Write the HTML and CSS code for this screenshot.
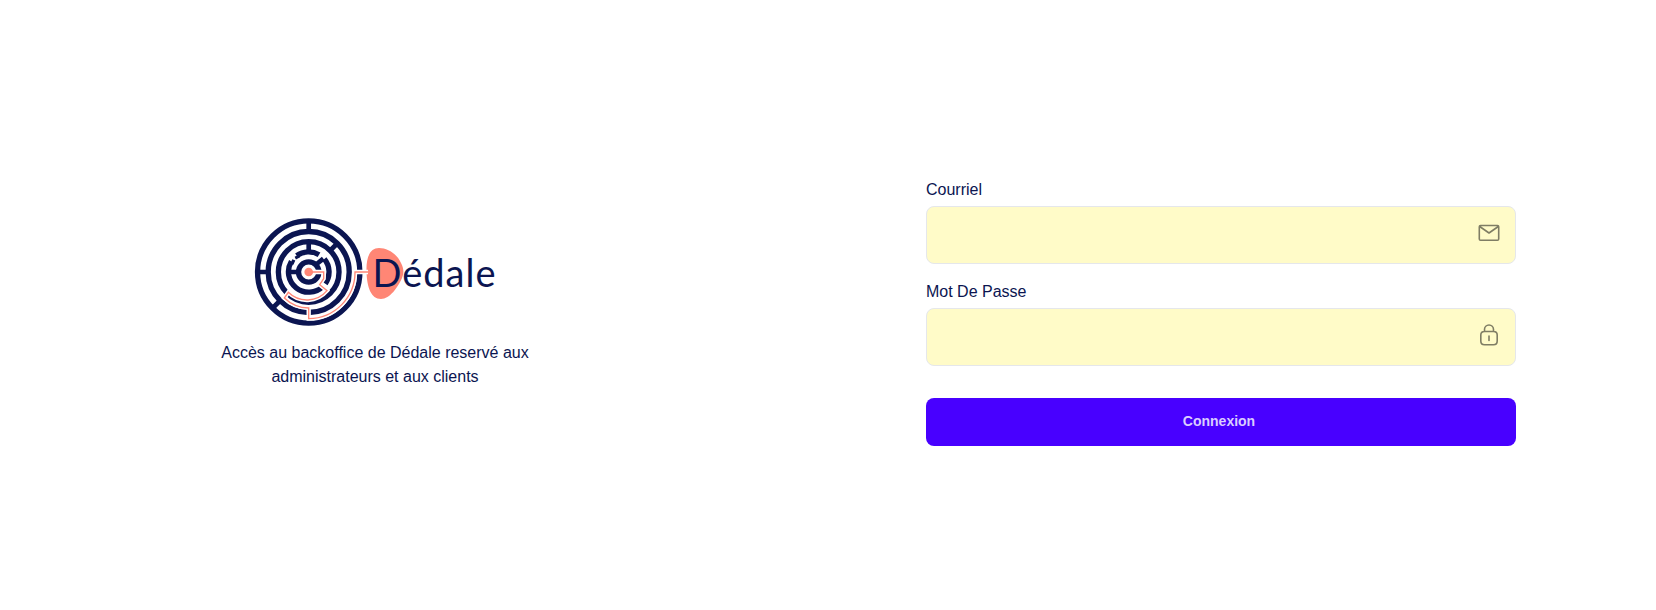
FILE: index.html
```html
<!DOCTYPE html>
<html lang="fr">
<head>
<meta charset="utf-8">
<title>Dédale</title>
<link rel="stylesheet" href="styles.css">
</head>
<body>
<main class="page">
  <section class="intro">
    <svg class="logo" viewBox="0 0 242 110" role="img" aria-label="Dédale">
      <path class="blob" d="M112.500 55C112 40 116 31 125 31C134 31 143 37 147 46C150 52 150 56 148 61C144 70 136 82 127 82C117 82 113 70 112.500 55Z"/>
      <g transform="translate(54.700 55) scale(.33333)">
        <g class="maze">
          <circle r="153.500"/>
          <circle r="121.500"/>
          <circle r="91"/>
          <path d="M-36 -49A61 61 0 0 1 31 -52M47 -39A61 61 0 0 1 50 35M43 43A61 61 0 0 1 -52 -32"/>
          <circle r="30.500"/>
          <path class="spoke" d="M0 -153V-122M0 -92V-61M-153 0H-122M-61 0H-31M66 -66L87 -87M24 -24L44 -40M-87 87L-108 108M-36 -49L-32 -41M-52 -32L-43 -28"/>
        </g>
        <path class="halo" d="M0 0H45V20L33 38L55 56A79 79 0 0 1 -61 61L-73 78A107 107 0 0 0 0 108V140A140 140 0 0 0 139 0H178"/>
        <path class="thread" d="M0 0H45V20L33 38L55 56A79 79 0 0 1 -61 61L-73 78A107 107 0 0 0 0 108V140A140 140 0 0 0 139 0H178"/>
        <circle class="dot" r="13"/>
      </g>
      <text class="wordmark" x="118.500" y="69.700" textLength="123">Dédale</text>
    </svg>
    <p class="tagline">Accès au backoffice de Dédale reservé aux<br>administrateurs et aux clients</p>
  </section>
  <form class="login">
    <label class="label" for="email">Courriel</label>
    <div class="field">
      <input class="input" id="email" type="email">
      <svg class="icon" viewBox="0 0 22 22"><path d="M2.500 3.500H19.500Q20.700 3.500 20.700 4.700V17Q20.700 18.300 19.500 18.300H2.500Q1.300 18.300 1.300 17V4.700Q1.300 3.500 2.500 3.500ZM1.700 4.500L11 11L20.300 4.500"/></svg>
    </div>
    <label class="label" for="password">Mot De Passe</label>
    <div class="field">
      <input class="input" id="password" type="password">
      <svg class="icon" viewBox="0 0 22 22"><path d="M6.500 7.500V5.500A4.500 4.500 0 0 1 15.500 5.500V7.500M6.500 7.500H15.500Q19.200 7.500 19.200 11V17Q19.200 20.800 15.500 20.800H6.500Q2.800 20.800 2.800 17V11Q2.800 7.500 6.500 7.500ZM11 12V16.500"/></svg>
    </div>
    <button class="submit" type="button">Connexion</button>
  </form>
</main>
</body>
</html>
```
FILE: styles.css
```css
* { box-sizing: border-box; }
body { margin: 0; background: #fff; color: #0b1551; font: 16px/24px "Liberation Sans", Arial, sans-serif; }
.page { display: flex; height: 610px; }
.intro { width: 750px; padding-top: 217px; display: flex; flex-direction: column; align-items: center; }
.logo { width: 242px; height: 110px; display: block; overflow: visible; }
.tagline { margin: 14px 0 0; text-align: center; }
.login { width: 590px; margin-left: 176px; padding-top: 178px; }
.label { display: block; height: 24px; margin-bottom: 4px; }
.field { position: relative; height: 58px; margin-bottom: 16px; }
.input { display: block; width: 100%; height: 58px; padding: 16px 56px 16px 16px; border: 1px solid #e5e7eb; border-radius: 8px; background: #fffbc8; font: inherit; outline: none; }
.icon { position: absolute; right: 16px; top: 16px; width: 22px; height: 22px; fill: none; stroke: #7f7d64; stroke-width: 1.600; stroke-linecap: round; stroke-linejoin: round; }
.submit { display: block; width: 100%; height: 48px; margin-top: 32px; padding: 0 4px 2px 0; border: 0; border-radius: 8px; background: #4800ff; color: #dacdff; font: bold 14px/20px "Liberation Sans", Arial, sans-serif; }
.maze { fill: none; stroke: #0b1551; stroke-width: 16; }
.spoke { stroke-width: 14; }
.halo { fill: none; stroke: #fff; stroke-width: 13; }
.thread { fill: none; stroke: #ff8675; stroke-width: 4; }
.dot, .blob { fill: #ff8675; }
.wordmark { fill: #0b1551; font: 38px Lato, sans-serif; }
```
